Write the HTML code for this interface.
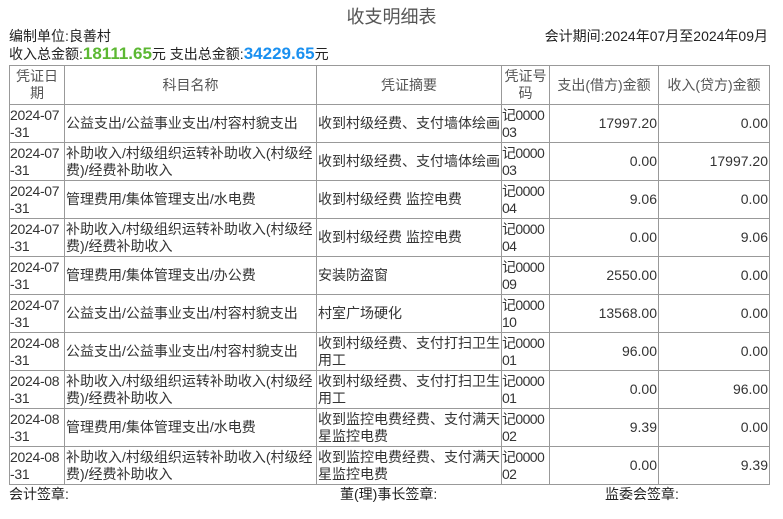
<!DOCTYPE html>
<html><head><meta charset="utf-8"><style>
body{margin:0;width:783px;height:519px;background:#fff;font-family:"Liberation Sans","Noto Sans CJK SC",sans-serif;color:#222;font-size:14px;position:relative;overflow:hidden}
.t{position:absolute;left:0;width:783px;top:3px;text-align:center;font-size:18px;color:#555}
.a{position:absolute;font-size:14px}
table{position:absolute;left:9px;top:65px;border-collapse:collapse;table-layout:fixed;width:760px}
td{border:1px solid #999;padding:0 1px;line-height:17px;height:37px;font-size:14px;vertical-align:middle;overflow:hidden;word-break:break-all;color:#333}
td:nth-child(4){letter-spacing:-0.6px;padding:0}
td:nth-child(1){padding:0;white-space:nowrap;letter-spacing:-0.3px}
tr.h td{text-align:center;height:38px;color:#555;letter-spacing:0;white-space:normal}
.r{text-align:right}
</style></head><body>
<div class="t">收支明细表</div>
<div class="a" style="left:9px;top:26px">编制单位:良善村</div>
<div class="a" style="right:15px;top:26px">会计期间:2024年07月至2024年09月</div>
<div class="a" style="left:9px;top:44px">收入总金额:<b style="color:#5cb833;font-size:17px">18111.65</b>元 支出总金额:<b style="color:#1a90f0;font-size:17px">34229.65</b>元</div>
<table>
<colgroup><col style="width:55px"><col style="width:252px"><col style="width:185px"><col style="width:48px"><col style="width:109px"><col style="width:111px"></colgroup>
<tr class="h"><td>凭证日期</td><td>科目名称</td><td>凭证摘要</td><td>凭证号码</td><td>支出(借方)金额</td><td>收入(贷方)金额</td></tr>
<tr><td>2024-07<br>-31</td><td>公益支出/公益事业支出/村容村貌支出</td><td>收到村级经费、支付墙体绘画</td><td>记000003</td><td class="r">17997.20</td><td class="r">0.00</td></tr>
<tr><td>2024-07<br>-31</td><td>补助收入/村级组织运转补助收入(村级经费)/经费补助收入</td><td>收到村级经费、支付墙体绘画</td><td>记000003</td><td class="r">0.00</td><td class="r">17997.20</td></tr>
<tr><td>2024-07<br>-31</td><td>管理费用/集体管理支出/水电费</td><td>收到村级经费 监控电费</td><td>记000004</td><td class="r">9.06</td><td class="r">0.00</td></tr>
<tr><td>2024-07<br>-31</td><td>补助收入/村级组织运转补助收入(村级经费)/经费补助收入</td><td>收到村级经费 监控电费</td><td>记000004</td><td class="r">0.00</td><td class="r">9.06</td></tr>
<tr><td>2024-07<br>-31</td><td>管理费用/集体管理支出/办公费</td><td>安装防盗窗</td><td>记000009</td><td class="r">2550.00</td><td class="r">0.00</td></tr>
<tr><td>2024-07<br>-31</td><td>公益支出/公益事业支出/村容村貌支出</td><td>村室广场硬化</td><td>记000010</td><td class="r">13568.00</td><td class="r">0.00</td></tr>
<tr><td>2024-08<br>-31</td><td>公益支出/公益事业支出/村容村貌支出</td><td>收到村级经费、支付打扫卫生用工</td><td>记000001</td><td class="r">96.00</td><td class="r">0.00</td></tr>
<tr><td>2024-08<br>-31</td><td>补助收入/村级组织运转补助收入(村级经费)/经费补助收入</td><td>收到村级经费、支付打扫卫生用工</td><td>记000001</td><td class="r">0.00</td><td class="r">96.00</td></tr>
<tr><td>2024-08<br>-31</td><td>管理费用/集体管理支出/水电费</td><td>收到监控电费经费、支付满天星监控电费</td><td>记000002</td><td class="r">9.39</td><td class="r">0.00</td></tr>
<tr><td>2024-08<br>-31</td><td>补助收入/村级组织运转补助收入(村级经费)/经费补助收入</td><td>收到监控电费经费、支付满天星监控电费</td><td>记000002</td><td class="r">0.00</td><td class="r">9.39</td></tr>
</table>
<div class="a" style="left:9px;top:484px">会计签章:</div>
<div class="a" style="left:340px;top:484px">董(理)事长签章:</div>
<div class="a" style="left:605px;top:484px">监委会签章:</div>
</body></html>
